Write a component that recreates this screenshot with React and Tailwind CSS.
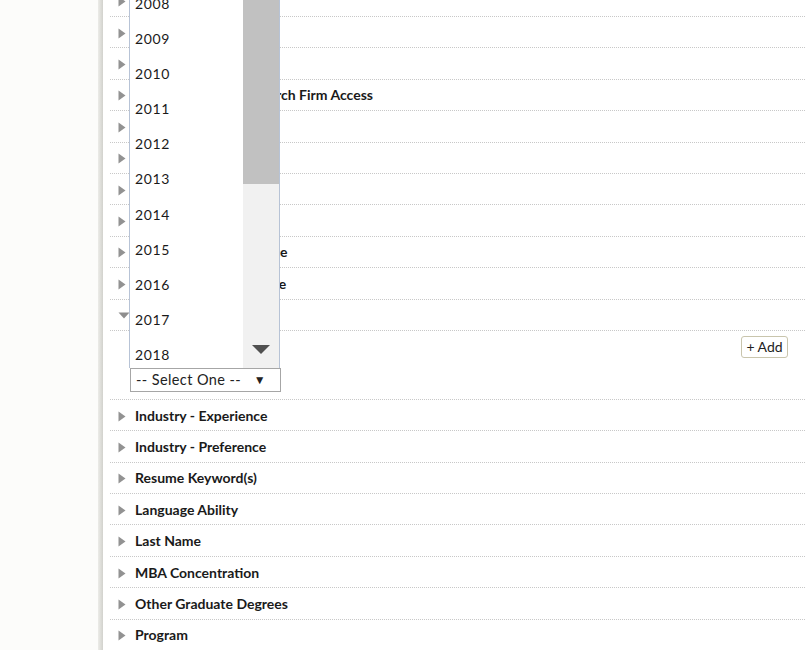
const years = ['2008', '2009', '2010', '2011', '2012', '2013', '2014', '2015', '2016', '2017', '2018'];

const topRows = [
  'Class Year',
  'Citizenship',
  'Degree',
  'Allowed Executive Search Firm Access',
  'First Name',
  'Gender',
  'Geographic Experience',
  'Geographic Preference',
  'Job Function Experience',
  'Job Function Preference',
];

const bottomRows = [
  'Industry - Experience',
  'Industry - Preference',
  'Resume Keyword(s)',
  'Language Ability',
  'Last Name',
  'MBA Concentration',
  'Other Graduate Degrees',
  'Program',
];

const RightArrow = () => (
  <svg width="8" height="11" viewBox="0 0 8 11" className="flex-shrink-0">
    <polygon points="0.5,0.5 7.5,5.5 0.5,10.5" fill="#929292" />
  </svg>
);

const DownArrow = () => (
  <svg width="12" height="7" viewBox="0 0 12 7" className="flex-shrink-0">
    <polygon points="0.5,0.5 11.5,0.5 6,6.5" fill="#8e8e8e" />
  </svg>
);

const Row = ({ label }) => (
  <div className="h-[31.4px] flex items-center border-b border-dotted border-[#c8c8c8] pl-[8px]">
    <div className="w-[17px] flex items-center pt-[2px]">
      <RightArrow />
    </div>
    <span className="text-[14px] font-bold text-[#1a1a1a] whitespace-nowrap">{label}</span>
  </div>
);

// Open native-looking list of years above the select
const YearList = () => (
  <div className="absolute left-[-1px] bottom-full w-[151px] h-[400px] bg-white border-l border-r border-[#b7c3d6] flex overflow-hidden">
    <div className="flex-1 flex flex-col justify-end">
      <div className="-mb-[4.6px]">
        {years.map((y) => (
          <div key={y} className="h-[35.2px] flex items-center pl-[5px] text-[14px] tracking-[0.6px] text-[#1a1a1a]">
            {y}
          </div>
        ))}
      </div>
    </div>
    <div className="w-[36px] bg-[#f1f1f1] flex flex-col justify-between">
      <div className="h-[216px] bg-[#c1c1c1]"></div>
      <div className="flex justify-center pb-[14px]">
        <svg width="18" height="9" viewBox="0 0 18 9">
          <polygon points="0,0 18,0 9,9" fill="#505050" />
        </svg>
      </div>
    </div>
  </div>
);

export default function App() {
  return (
    <div className="h-[650px] w-[809px] overflow-hidden flex bg-white" style={{ fontFamily: 'Lato, "Open Sans", sans-serif' }}>
      <div className="w-[98px] bg-[#fcfcfa]"></div>
      <div className="w-[5px] bg-gradient-to-r from-[#ecece8] to-[#d2d2cd]"></div>
      <div className="flex-1 pl-[7px] pr-[4px]">
        <div className="-mt-[14.4px]">
          {topRows.map((label) => (
            <Row key={label} label={label} />
          ))}

          {/* expanded criteria */}
          <div className="h-[31.4px] flex items-center border-b border-dotted border-[#c8c8c8] pl-[8px]">
            <div className="w-[17px] flex items-center pt-[1px]">
              <DownArrow />
            </div>
            <span className="text-[14px] font-bold text-[#1a1a1a]">Graduation Year</span>
          </div>
          <div className="h-[69px] border-b border-dotted border-[#c8c8c8] pt-[5px]">
            <div className="flex justify-end pr-[17px]">
              <button className="h-[22px] w-[47px] bg-white border border-[#c9c5ad] rounded-[3px] text-[14px] text-[#222] leading-none">
                + Add
              </button>
            </div>
            <div className="mt-[10px] ml-[20px] relative w-[151px]">
              <YearList />
              <div className="h-[24px] border border-[#a6a6a6] bg-white flex items-center justify-between pl-[5px] pr-[14px] text-[14.5px] tracking-[0.4px] text-[#222]">
                <span>-- Select One --</span>
                <span className="text-[12px]">▼</span>
              </div>
            </div>
          </div>

          {bottomRows.map((label) => (
            <Row key={label} label={label} />
          ))}
        </div>
      </div>
    </div>
  );
}
